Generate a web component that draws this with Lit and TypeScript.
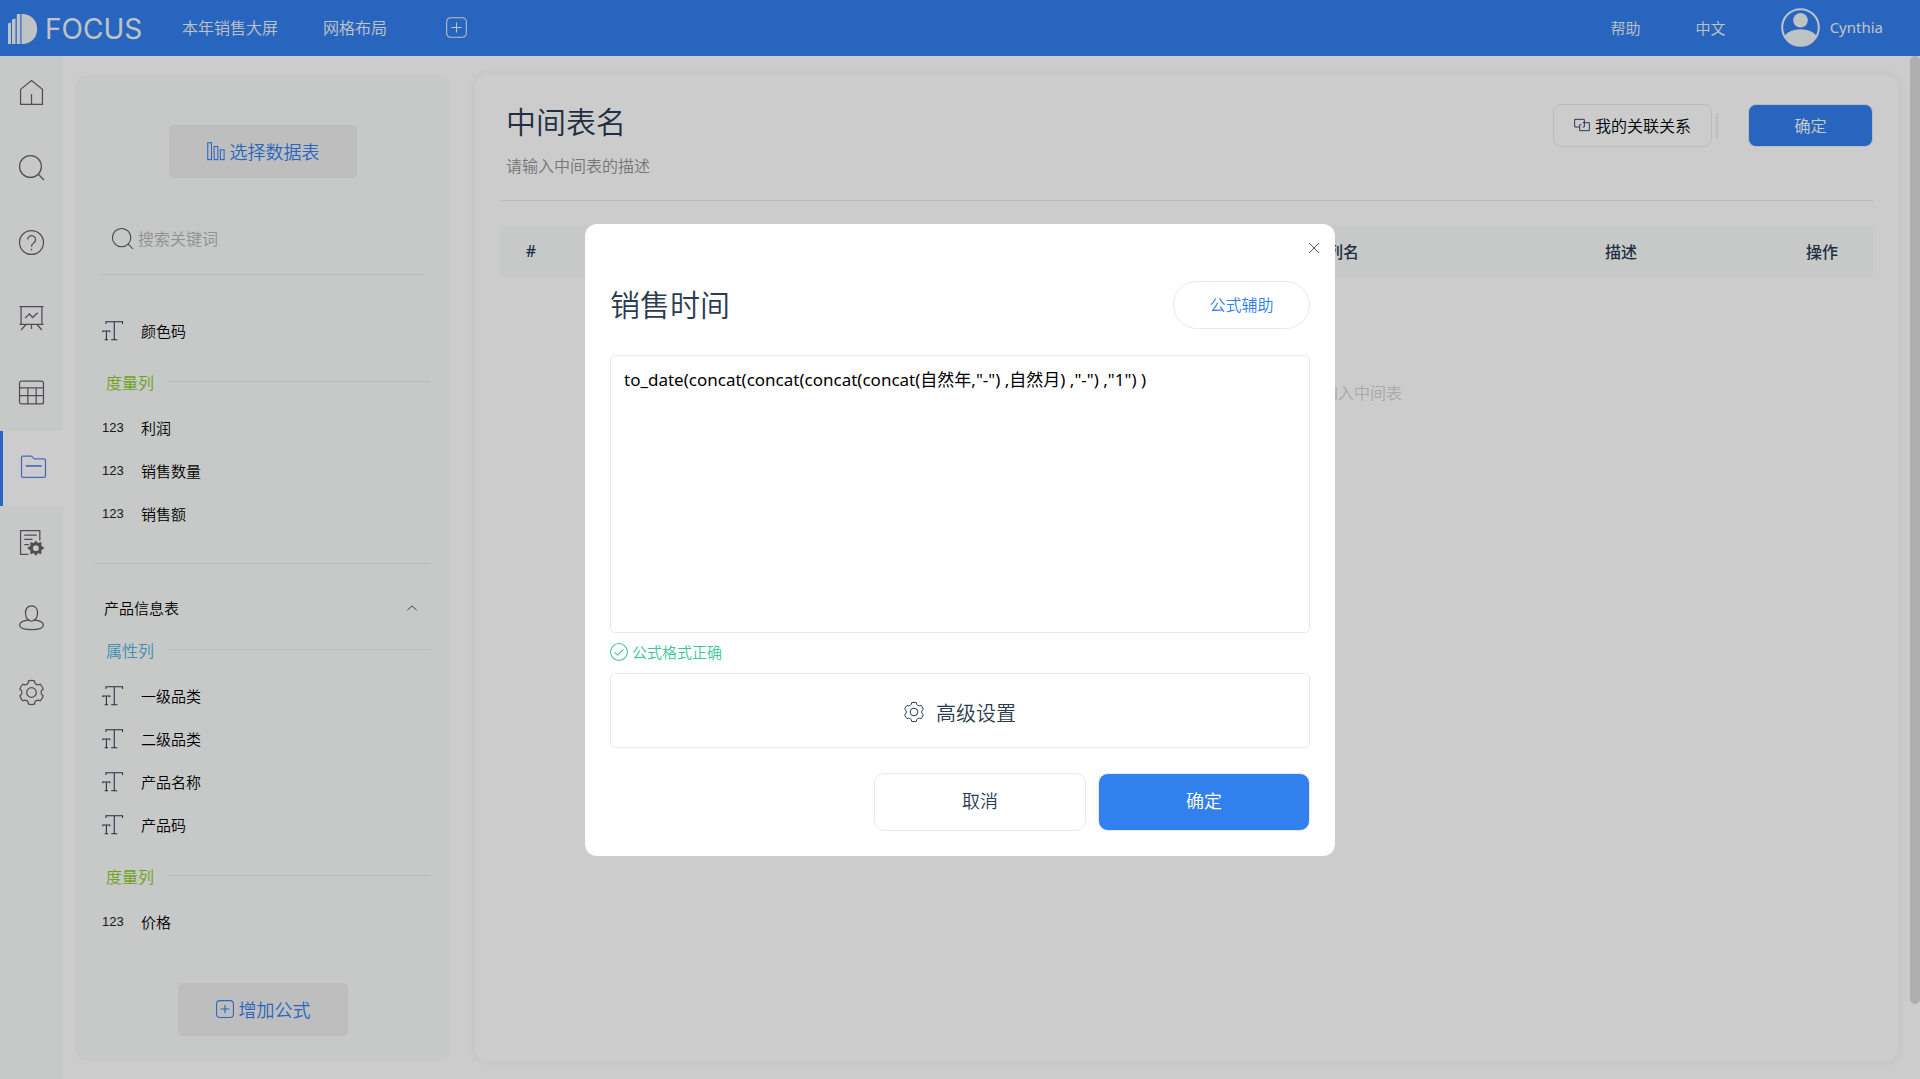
import { LitElement, html, svg, css } from "lit";
import { customElement, state } from "lit/decorators.js";
import { classMap } from "lit/directives/class-map.js";

// Builds a six-toothed gear outline around (12, 12).
function gearPath(): string {
  const point = (radius: number, degrees: number) => {
    const angle = (degrees * Math.PI) / 180;
    return `${(12 + radius * Math.cos(angle)).toFixed(2)} ${(12 + radius * Math.sin(angle)).toFixed(2)}`;
  };
  let path = "";
  for (let tooth = 0; tooth < 6; tooth++) {
    const a = tooth * 60 - 90;
    path += `${tooth === 0 ? "M" : "L"}${point(11.6, a - 14)}`;
    path += `Q${point(12, a)} ${point(11.6, a + 14)}`;
    path += `L${point(9.8, a + 19)}Q${point(8.6, a + 30)} ${point(9.8, a + 41)}`;
  }
  return path + "Z";
}

const GEAR = gearPath();

const icons: Record<string, unknown> = {
  home: svg`<path d="M1.5 9 12 .5 22.500 9V23.500H1.500Z"/><path d="M12 13.500V23.500"/>`,
  search: svg`<circle cx="11" cy="11" r="10.500"/><path d="M18.500 18.500 24 24"/>`,
  help: svg`<circle cx="12" cy="12" r="11.500"/><path d="M8.300 9.200a3.800 3.800 0 1 1 6 3.100c-1.500 1-2.300 1.700-2.300 3.700"/><path d="M12 18v1.600"/>`,
  board: svg`<path d="M.5 1.500H23.500M2 1.500V18.500M22 1.500V18.500M.5 18.500H23.500M7 18.500 2 24M17 18.500 22 24M12 18.500V23"/><path d="M6 12.500 10 8.500 13 12 18 7.500"/>`,
  table: svg`<rect x=".5" y="1" width="23" height="22" rx="2"/><path d="M.5 7.500H23.500M.5 15H23.500M8.500 7.500V23M16.500 7.500V23"/>`,
  folder: svg`<path d="M.5 20.500V2.500q0-1.500 1.500-1.500H9.500q1.300 0 1.800 1.300T13 3.800H22q1.500 0 1.500 1.500V20q0 1.500-1.500 1.500H2q-1.500 0-1.500-1.500Z"/><path d="M4.500 10.500H20" stroke-width="1.600"/>`,
  report: svg`<path d="M9 23.500H1.500V.5H20V10"/><path d="M5 5H17M5 9H13M5 14H9.500"/><path d="M16 11.500 17.500 13.600 20.500 12.700 20.400 15.600 22.900 17.500 20.400 19.400 20.500 22.300 17.500 21.400 16 23.600 14.300 21.400 11.500 22.300 11.600 19.400 9 17.500 11.600 15.600 11.500 12.700 14.300 13.600Z" transform="translate(.2 -.1)" fill="currentColor" stroke-width="1.600"/><circle cx="16.200" cy="17.400" r="2.800" class="hole"/>`,
  user: svg`<path d="M9.600 15C7.500 13.500 6.200 10.500 6.200 7.500 6.200 3.500 8.500.8 12 .8s5.800 2.700 5.800 6.700c0 3-1.300 6-3.400 7.500"/><path d="M9.600 14.200C4 14.800.6 16.700.6 19.300c0 2.800 5 4.400 11.400 4.400s11.400-1.600 11.400-4.400c0-2.600-3.400-4.500-9-5.100C12.800 16 11.200 16 9.600 14.200Z"/>`,
  gear: svg`<path d=${GEAR}/><circle cx="12" cy="12" r="4.600"/>`,
  add: svg`<rect x=".8" y=".8" width="22.400" height="22.400" rx="4.500"/><path d="M12 6.200V17.800M6.200 12H17.800"/>`,
  bars: svg`<rect x="1" y="1" width="5" height="22.500"/><rect x="9.500" y="6" width="5" height="17.500"/><rect x="17.800" y="10.500" width="5" height="13"/>`,
  link: svg`<path d="M8.500 15H1V3.500H15.500V8M13 8.500H23V20.500H8.500V14M15.500 8V15H13M8.500 14V11.500H11"/>`,
  text: svg`<path d="M4.500 4.500V2H23.500V4.500M14 2V22M10.500 22.500H17.500" /><path d="M.8 14V12.500H9V14M5 12.500V22M3 22.500H7"/>`,
  check: svg`<circle cx="12" cy="12" r="11.300"/><path d="M6 12.500 10.200 16.200 18 8.500"/>`,
  close: svg`<path d="M0 0 24 24M24 0 0 24"/>`,
  up: svg`<path d="M1 17 12 7 23 17"/>`,
};

const icon = (name: string, kind = "") =>
  html`<svg class=${`icon ${kind}`} viewBox="0 0 24 24" aria-hidden="true">${icons[name]}</svg>`;

type Column = { name: string; numeric?: boolean };

@customElement("app-root")
export class AppRoot extends LitElement {
  static styles = css`
    :host {
      display: block;
      font-family: "Noto Sans", "Noto Sans CJK SC", sans-serif;
      font-size: 16px;
      font-weight: 350;
      color: #000;
    }
    * { box-sizing: border-box; }
    button, input, textarea { font: inherit; color: inherit; margin: 0; }
    button { cursor: pointer; padding: 0 0 2px; border: 0; background: none; }
    h1, h2, ul { margin: 0; padding: 0; font-weight: inherit; list-style: none; }
    a { color: inherit; text-decoration: none; }

    .icon {
      width: 25px;
      height: 25px;
      flex: none;
      display: block;
      fill: none;
      stroke: currentColor;
      stroke-width: 1.2;
      overflow: visible;
    }
    .icon .hole { fill: #f9fbfa; stroke: none; }
    .icon.s21 { width: 21px; height: 21px; }
    .icon.s20 { width: 20px; height: 20px; }
    .icon.s18 { width: 18px; height: 18px; stroke-width: 1.4; }
    .icon.s16 { width: 16px; height: 16px; stroke-width: 1.4; }
    .icon.s10 { width: 10px; height: 10px; stroke-width: 2.4; }

    .page { min-height: 100vh; display: flex; flex-direction: column; background: #fff; }

    .topbar {
      height: 56px;
      flex: none;
      display: flex;
      align-items: center;
      padding: 0 37px 2px 8px;
      background: #327fee;
      color: #f0f4f8;
    }
    .logo { display: flex; align-items: center; gap: 7px; width: 174px; padding-top: 3px; }
    .logo svg { width: 30px; height: 30px; fill: currentColor; }
    .wordmark { font-family: Inter, "Liberation Sans", sans-serif; font-size: 28px; font-weight: 400; }
    .tabs { display: flex; align-items: center; gap: 45px; flex: 1; }
    .tabs button { margin-left: 14px; padding: 0; }
    .tools { display: flex; align-items: center; gap: 55px; font-size: 15px; }
    .account { display: flex; align-items: center; gap: 10px; font-weight: 400; }
    .avatar { width: 39px; height: 39px; fill: currentColor; }
    .avatar .ring { fill: none; stroke: currentColor; stroke-width: 2; }

    .body { flex: 1; display: flex; }
    .rail { width: 63px; flex: none; background: #f9fbfa; color: #68606a; }
    .rail a { height: 75px; padding-bottom: 2px; display: flex; align-items: center; justify-content: center; }
    .rail a.active { background: #fff; border-left: 3px solid #327fee; color: #5b83ea; }

    .side {
      width: 375px;
      flex: none;
      margin: 19px 25px 18px 12px;
      padding: 50px 19px 25px;
      border-radius: 12px;
      background: #f9fbfa;
      display: flex;
      flex-direction: column;
    }
    .soft {
      align-self: center;
      display: flex;
      align-items: center;
      gap: 5px;
      padding: 0 37px 2px 38px;
      height: 53px;
      border-radius: 5px;
      background: #eee;
      color: #327fee;
      font-size: 18px;
    }
    .side > .soft:last-child { margin-top: auto; }
    .search {
      height: 72px;
      margin: 25px 6px 34px;
      padding-left: 12px;
      display: flex;
      align-items: center;
      gap: 5px;
      border-bottom: 1px solid #ececec;
      color: #4c5660;
    }
    .search input { flex: 1; min-width: 0; border: 0; outline: 0; padding: 0; background: none; }
    ::placeholder { color: #b4b6b6; opacity: 1; }
    ul { padding-bottom: 1px; }
    .field {
      height: 43px;
      padding-left: 8px;
      display: grid;
      grid-template-columns: 21px 1fr;
      column-gap: 18px;
      align-items: center;
      font-size: 15px;
    }
    .field .icon { color: #2b3b52; }
    .digits { font-family: "Liberation Sans", sans-serif; font-size: 13px; font-weight: 400; color: #222; }
    .group {
      height: 53px;
      padding: 4px 0 0 12px;
      display: flex;
      align-items: center;
      gap: 14px;
      color: #8acb26;
    }
    .group::after { content: ""; flex: 1; height: 1px; background: #ebecec; }
    .group.attribute { color: #4fb3e0; }
    .source {
      width: 100%;
      margin-top: 27px;
      padding: 32px 14px 1px 10px;
      border-top: 1px solid #ebecec;
      display: flex;
      justify-content: space-between;
      align-items: center;
      line-height: 24px;
      font-size: 15px;
    }
    .source .icon { color: #555; }

    .main {
      flex: 1;
      min-width: 0;
      margin: 19px 12px 18px 0;
      padding: 25px;
      border-radius: 12px;
      background: #fff;
      box-shadow: 0 0 6px 3px #f7f8f8;
    }
    .heading { display: flex; align-items: flex-start; height: 101px; padding-left: 6px; border-bottom: 1px solid #ececec; }
    .names { flex: 1; display: grid; }
    .names h1 { font-size: 30px; line-height: 44px; color: #2b3b52; }
    .names input { border: 0; outline: 0; padding: 0; background: none; line-height: 24px; height: 24px; margin-top: 10px; }
    .names ::placeholder { color: #949494; }
    .relations {
      margin-top: 4px;
      height: 43px;
      padding: 0 20px 2px;
      display: flex;
      align-items: center;
      gap: 5px;
      border: 1px solid #e4eeee;
      border-radius: 8px;
    }
    .relations .icon { color: #2b3b52; }
    .bar { width: 2px; height: 25px; margin: 13px 30px 0 4px; background: #eee; }
    .primary { background: #327fee; color: #fff; border: 1px solid #e3ebf3; border-radius: 8px; }
    .save { width: 125px; height: 43px; margin-top: 4px; }
    table { width: 100%; margin-top: 25px; border-collapse: collapse; table-layout: fixed; }
    th { height: 51px; padding: 0 0 2px; background: #f9fbfa; font-weight: 500; color: #2b3b52; }
    .c-index { width: 62px; }
    .c-alias { width: 256px; }
    .c-note { width: 300px; }
    .c-action { width: 102px; }
    .empty { padding: 104px 0 0 351px; text-align: center; line-height: 24px; color: #d4d4d4; }
    .scroll { width: 10px; flex: none; }
    .scroll div { height: 93%; max-height: 948px; border-radius: 5px; background: #dadada; }

    .overlay {
      position: fixed;
      inset: 0;
      display: grid;
      place-items: center;
      background: rgba(0, 0, 0, 0.2);
    }
    .dialog {
      position: relative;
      width: min(750px, 100%);
      padding: 57px 25px 25px;
      border-radius: 12px;
      background: #fff;
    }
    .close {
      position: absolute;
      top: 14px;
      right: 11px;
      width: 20px;
      height: 20px;
      padding: 0;
      display: grid;
      place-items: center;
      color: #555;
    }
    .title { display: flex; align-items: center; justify-content: space-between; }
    .title h2 { font-size: 30px; line-height: 44px; color: #2b3b52; }
    .assist { width: 137px; height: 48px; border: 1px solid #e3ebf3; border-radius: 24px; color: #327fee; }
    textarea {
      display: block;
      width: 100%;
      height: 278px;
      margin-top: 26px;
      padding: 12px 13px;
      border: 1px solid #e3ebf3;
      border-radius: 5px;
      outline: 0;
      resize: none;
      background: #fff;
      line-height: 24px;
      font-size: 17px;
      font-weight: 400;
    }
    .status { height: 40px; padding-bottom: 2px; display: flex; align-items: center; gap: 4px; font-size: 15px; color: #3cc49a; }
    .advanced {
      width: 100%;
      height: 75px;
      padding: 4px 0 0;
      display: flex;
      align-items: center;
      justify-content: center;
      gap: 12px;
      border: 1px solid #e3ebf3;
      border-radius: 5px;
      font-size: 20px;
      color: #2b3b52;
    }
    .actions { display: flex; justify-content: flex-end; gap: 12px; margin-top: 25px; }
    .actions button { width: 212px; height: 58px; padding-bottom: 4px; font-size: 18px; border: 1px solid #e3ebf3; border-radius: 10px; }
    .cancel { color: #2b3b52; }
  `;

  @state() private formula =
    'to_date(concat(concat(concat(concat(自然年,"-") ,自然月) ,"-") ,"1") )';

  private rail = ["home", "search", "help", "board", "table", "folder", "report", "user", "gear"];

  private fields(columns: Column[]) {
    return html`<ul>
      ${columns.map(
        (c) => html`<li class="field">
          ${c.numeric ? html`<span class="digits">123</span>` : icon("text", "s21")}
          <span>${c.name}</span>
        </li>`
      )}
    </ul>`;
  }

  render() {
    return html`
      <div class="page">
        <header class="topbar">
          <div class="logo">
            <svg viewBox="0 0 30 30" aria-hidden="true">
              <path d="M0 9.500 3 8.500V30H0ZM4 5.500 7.500 4.500V30H4ZM8.800 0H12.300V30H8.800ZM13.500 0H14.500C23 0 29.200 6.600 29.200 15S23 30 14.500 30H13.500Z" />
            </svg>
            <span class="wordmark">FOCUS</span>
          </div>
          <nav class="tabs">
            <a href="#">本年销售大屏</a>
            <a href="#">网格布局</a>
            <button aria-label="+">${icon("add", "s21")}</button>
          </nav>
          <div class="tools">
            <a href="#">帮助</a>
            <a href="#">中文</a>
            <a class="account" href="#">
              <svg class="avatar" viewBox="0 0 39 39" aria-hidden="true">
                <circle class="ring" cx="19.500" cy="19.500" r="18.300" />
                <circle cx="19.500" cy="12.300" r="7.300" />
                <path d="M3.500 27.500Q9.500 21.300 19.500 21.300T35.500 27.500A18 18 0 0 1 3.500 27.500Z" />
              </svg>
              <span>Cynthia</span>
            </a>
          </div>
        </header>

        <div class="body">
          <nav class="rail">
            ${this.rail.map(
              (name) => html`<a href="#" class=${classMap({ active: name === "folder" })}>${icon(name)}</a>`
            )}
          </nav>

          <aside class="side">
            <button class="soft">${icon("bars", "s18")}选择数据表</button>
            <label class="search">${icon("search", "s21")}<input placeholder="搜索关键词" /></label>
            ${this.fields([{ name: "颜色码" }])}
            <div class="group">度量列</div>
            ${this.fields([
              { name: "利润", numeric: true },
              { name: "销售数量", numeric: true },
              { name: "销售额", numeric: true },
            ])}
            <button class="source">产品信息表${icon("up", "s10")}</button>
            <div class="group attribute">属性列</div>
            ${this.fields([{ name: "一级品类" }, { name: "二级品类" }, { name: "产品名称" }, { name: "产品码" }])}
            <div class="group">度量列</div>
            ${this.fields([{ name: "价格", numeric: true }])}
            <button class="soft">${icon("add", "s18")}增加公式</button>
          </aside>

          <main class="main">
            <div class="heading">
              <div class="names">
                <h1>中间表名</h1>
                <input placeholder="请输入中间表的描述" aria-label="请输入中间表的描述" />
              </div>
              <button class="relations">${icon("link", "s16")}我的关联关系</button>
              <span class="bar"></span>
              <button class="primary save">确定</button>
            </div>
            <table>
              <thead>
                <tr>
                  <th class="c-index">#</th>
                  <th></th>
                  <th class="c-alias">列名</th>
                  <th class="c-note">描述</th>
                  <th class="c-action">操作</th>
                </tr>
              </thead>
              <tbody>
                <tr><td class="empty" colspan="5">加入中间表</td></tr>
              </tbody>
            </table>
          </main>
          <div class="scroll"><div></div></div>
        </div>
      </div>

      <div class="overlay">
        <section class="dialog" role="dialog" aria-modal="true" aria-labelledby="dialog-title">
          <button class="close" aria-label="×">${icon("close", "s10")}</button>
          <div class="title">
            <h2 id="dialog-title">销售时间</h2>
            <button class="assist">公式辅助</button>
          </div>
          <textarea
            aria-labelledby="dialog-title"
            spellcheck="false"
            .value=${this.formula}
            @input=${(e: Event) => (this.formula = (e.target as HTMLTextAreaElement).value)}
          ></textarea>
          <div class="status">${icon("check", "s18")}公式格式正确</div>
          <button class="advanced">${icon("gear", "s20")}高级设置</button>
          <div class="actions">
            <button class="cancel">取消</button>
            <button class="primary">确定</button>
          </div>
        </section>
      </div>
    `;
  }
}
